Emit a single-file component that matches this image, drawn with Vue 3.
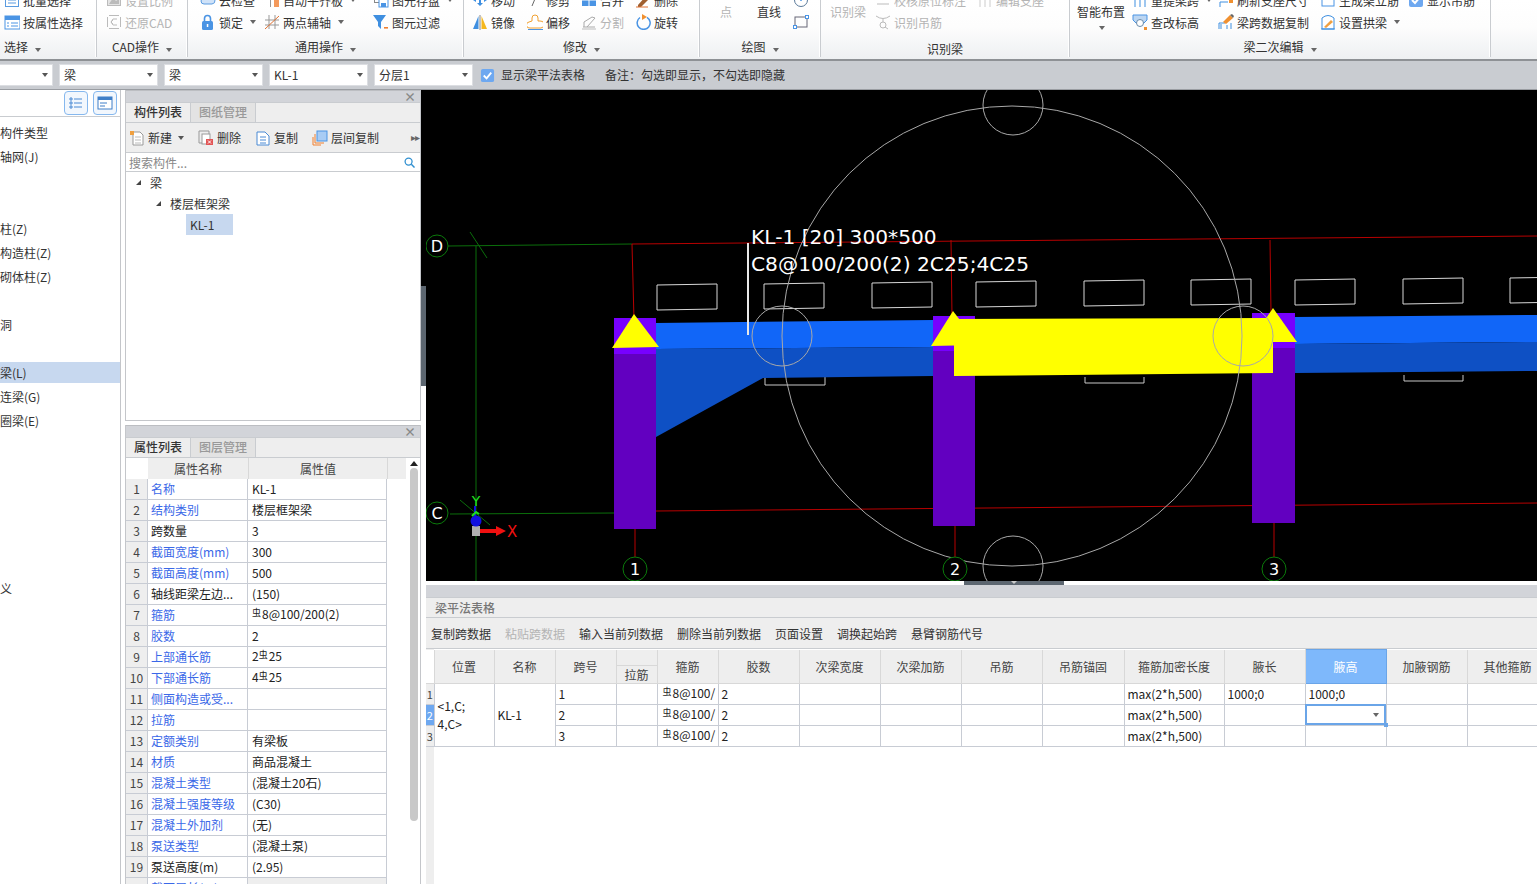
<script setup>
const icons = {
  list: '<rect x="1" y="1" width="14" height="3" fill="#f0a040"/><rect x="1.5" y="1.5" width="13" height="13" fill="none" stroke="#5a9be0"/><path d="M4 8h8M4 11h8" stroke="#5a9be0"/>',
  prop: '<rect x="1" y="2" width="15" height="13" fill="#fff" stroke="#4a94e4"/><rect x="1" y="2" width="15" height="4" fill="#4a94e4"/><path d="M3 9h2M7 9h7M3 12h2M7 12h7" stroke="#4a94e4"/>',
  scale: '<rect x="1.5" y="2.5" width="13" height="11" fill="#e4e4e4" stroke="#bbb"/><path d="M3 12l4-6 3 3 3-2v5z" fill="#bbb"/>',
  cad: '<path d="M3 1.5h10M3 14.5h10M1.5 3v10M14.5 3v10" stroke="#bbb"/><path d="M11 5H7L5 8l2 3h4M7 6l-2 2 2 2" fill="none" stroke="#bbb"/>',
  cloud: '<path d="M4 12a3 3 0 010-6 4 4 0 017-1 3.5 3.5 0 011 7z" fill="#cfe2f8" stroke="#5a9be0"/>',
  lock: '<rect x="2" y="7" width="11" height="9" rx="1.5" fill="#4a94e4"/><path d="M4.5 7V4.5a3 3 0 016 0V7" fill="none" stroke="#4a94e4" stroke-width="1.6"/><rect x="6.8" y="10" width="1.5" height="3" fill="#fff"/>',
  level: '<rect x="6" y="3" width="1" height="12" fill="#999"/><rect x="10" y="3" width="5" height="12" fill="#f49a5c"/>',
  axis: '<path d="M5 1v14M11 1v14M1 6h14M1 11h14" stroke="#999"/><path d="M1 15L15 2" stroke="#e07030"/>',
  save: '<rect x="1.5" y="2.5" width="9" height="8" fill="none" stroke="#888"/><rect x="6" y="7" width="9" height="8" fill="#fff" stroke="#4a94e4"/><rect x="8" y="11" width="5" height="4" fill="#4a94e4"/>',
  filter: '<path d="M0 1h13L8 8v7L5 12V8z" fill="#3f8fe0"/><rect x="11" y="13" width="4" height="1.6" fill="#f08030"/>',
  move: '<path d="M8 2l3 3H9v6h2l-3 3-3-3h2V5H5zM1 8l3-2v4zM15 8l-3-2v4z" fill="#3f8fe0"/>',
  trim: '<path d="M5 14L10 2" stroke="#666"/>',
  merge: '<rect x="1" y="2" width="14" height="12" fill="#4a94e4"/><path d="M1 8h14M8 2v12" stroke="#fff"/>',
  erase: '<path d="M3 13l8-9 3 3-8 8H3z" fill="#a06030"/><path d="M1 15h12" stroke="#e07030"/>',
  mirror: '<path d="M6.5 2v13H1z" fill="#3f8fe0"/><path d="M9.5 2v13H15z" fill="#f5b81e"/><path d="M8 1v15" stroke="#888"/>',
  offset: '<path d="M3 14a3 3 0 01-1-6l3-1V4a3 3 0 016 0v3h2a3.5 3.5 0 011 7z" fill="#fff" stroke="#f0a030"/><path d="M1 15.5h15" stroke="#4a94e4"/>',
  split: '<path d="M2 13h12M3 13V8l8-5 3 1-8 9" fill="none" stroke="#aaa"/><path d="M1 15h14" stroke="#bbb"/>',
  rotate: '<path d="M5 3.5a6.5 6.5 0 107-.2" fill="none" stroke="#4a94e4" stroke-width="1.5"/><path d="M7 0v6l5-3z" fill="#f09030"/>',
  circle: '<circle cx="8" cy="8" r="6.5" fill="none" stroke="#5a7a9a"/><circle cx="8" cy="8" r="1" fill="#4a94e4"/>',
  rect: '<rect x="2" y="3" width="12" height="10" fill="none" stroke="#667"/><rect x="0.5" y="11.5" width="3" height="3" fill="#fff" stroke="#4a94e4"/><rect x="12.5" y="1.5" width="3" height="3" fill="#fff" stroke="#4a94e4"/>',
  check: '<path d="M1 5h14v1l-3 2H4L1 6z" fill="#ccc"/><path d="M2 12h12" stroke="#bbb"/>',
  hook: '<path d="M1 2q7 5 14 0M8 5v3" fill="none" stroke="#bbb"/><circle cx="8" cy="11" r="3" fill="none" stroke="#bbb"/><path d="M10 13l3 2" stroke="#bbb"/>',
  seat: '<path d="M1 5h14M3 15V5M8 15V5M13 15V5" stroke="#ccc"/>',
  span: '<path d="M1 3h14v3H1zM3 6v9M8 6v9M13 6v9" fill="none" stroke="#3f8fe0"/><rect x="1" y="1" width="14" height="2" fill="#f09030"/>',
  height: '<path d="M1 1h14v5l-3 3H4L1 6z" fill="#bcd6f2" stroke="#4a94e4"/><circle cx="8" cy="9" r="3.5" fill="#fff" stroke="#6a8aa8"/><rect x="12" y="13" width="3" height="3" fill="#f09030"/>',
  copyspan: '<path d="M1 15V9h6M3 15v-5M9 15v-4M13 15V9" fill="none" stroke="#3f8fe0"/><path d="M5 8l7-7 3 3-7 6z" fill="#f09030"/><path d="M12 1l2-1 2 2-1 2z" fill="#666"/>',
  refresh: '<path d="M2 15v-5h8" fill="none" stroke="#3f8fe0"/><circle cx="9" cy="4" r="3" fill="#d8e8f8" stroke="#667"/><rect x="11" y="7" width="4" height="4" fill="#f09030"/>',
  arch: '<path d="M2 4q6-5 12 0v11H2z" fill="#fff" stroke="#3f8fe0"/><path d="M4 13l7-7 2 2-7 6z" fill="#f0a040"/><path d="M1 15h14" stroke="#3f8fe0"/>',
  frame: '<rect x="2" y="2" width="12" height="12" fill="#fff" stroke="#4a94e4"/><rect x="5" y="6" width="2" height="2" fill="#f09030"/><rect x="9" y="6" width="2" height="2" fill="#f09030"/>',
  checked: '<rect x="1" y="1" width="14" height="14" rx="2" fill="#6ea8f0"/><path d="M4 8l3 3 5-6" fill="none" stroke="#fff" stroke-width="2"/>',
  newdoc: '<path d="M4 2h7l3 3v10H4z" fill="#fff" stroke="#999"/><rect x="1" y="1" width="4" height="4" fill="#f0a040"/><path d="M6 7h6M6 10h6M6 13h6" stroke="#bbb"/>',
  del: '<path d="M1 1h10v3M1 1v12h4" fill="none" stroke="#999"/><rect x="4" y="4" width="8" height="10" fill="#fff" stroke="#999"/><rect x="8" y="9" width="7" height="6" fill="#e25555"/><path d="M10 10.5l3 3M13 10.5l-3 3" stroke="#fff"/>',
  copy: '<path d="M2 2h8l4 4v9H2z" fill="#fff" stroke="#4a8ad4"/><path d="M5 7h6M5 10h6M5 13h6" stroke="#4a8ad4"/>',
  floor: '<rect x="5" y="1" width="10" height="10" fill="#a8ccf4" stroke="#4a94e4"/><path d="M3 4v9h9M1 7v8h8" fill="none" stroke="#f08030"/>'
}

const ribbon = [
  { name: '选择', w: 97, pad: 4, left: true, cols: [
    { items: [{ t: '批量选择', i: 'list' }, { t: '按属性选择', i: 'prop' }] }
  ] },
  { name: 'CAD操作', w: 91, pad: 9, cols: [
    { items: [{ t: '设置比例', i: 'scale', dim: true }, { t: '还原CAD', i: 'cad', dim: true }] }
  ] },
  { name: '通用操作', w: 276, pad: 12, cols: [
    { w: 64, items: [{ t: '云检查', i: 'cloud' }, { t: '锁定', i: 'lock', drop: true }] },
    { w: 109, items: [{ t: '自动平齐板', i: 'level', drop: true }, { t: '两点辅轴', i: 'axis', drop: true }] },
    { items: [{ t: '图元存盘', i: 'save', drop: true }, { t: '图元过滤', i: 'filter' }] }
  ] },
  { name: '修改', w: 236, pad: 8, cols: [
    { w: 55, items: [{ t: '移动', i: 'move' }, { t: '镜像', i: 'mirror' }] },
    { w: 54, items: [{ t: '修剪', i: 'trim' }, { t: '偏移', i: 'offset' }] },
    { w: 54, items: [{ t: '合并', i: 'merge' }, { t: '分割', i: 'split', dim: true }] },
    { items: [{ t: '删除', i: 'erase' }, { t: '旋转', i: 'rotate' }] }
  ] },
  { name: '绘图', w: 121, pad: 20, cols: [
    { w: 37, items: [{ t: '点', big: true, dim: true }] },
    { w: 36, items: [{ t: '直线', big: true }] },
    { items: [{ i: 'circle' }, { i: 'rect' }] }
  ] },
  { name: '识别梁', w: 249, pad: 9, low: true, cols: [
    { w: 45, items: [{ t: '识别梁', big: true, dim: true }] },
    { w: 102, items: [{ t: '校核原位标注', i: 'check', dim: true }, { t: '识别吊筋', i: 'hook', dim: true }] },
    { items: [{ t: '编辑支座', i: 'seat', dim: true }] }
  ] },
  { name: '梁二次编辑', w: 421, pad: 7, cols: [
    { w: 55, items: [{ t: '智能布置', big: true, under: true }] },
    { w: 86, items: [{ t: '重提梁跨', i: 'span', drop: true }, { t: '查改标高', i: 'height' }] },
    { w: 102, items: [{ t: '刷新支座尺寸', i: 'refresh' }, { t: '梁跨数据复制', i: 'copyspan' }] },
    { w: 88, items: [{ t: '生成架立筋', i: 'frame' }, { t: '设置拱梁', i: 'arch', drop: true }] },
    { items: [{ t: '显示吊筋', i: 'checked' }] }
  ] }
]

const combos = [
  { t: '', w: 53 },
  { t: '梁', w: 99 },
  { t: '梁', w: 99 },
  { t: 'KL-1', w: 99 },
  { t: '分层1', w: 99 }
]

const navItems = ['构件类型', '轴网(J)', '', '', '柱(Z)', '构造柱(Z)', '砌体柱(Z)', '', '洞', '', '梁(L)', '连梁(G)', '圈梁(E)', '', '', '', '', '', '', '义']

const compTools = [
  { t: '新建', i: 'newdoc', drop: true },
  { t: '删除', i: 'del' },
  { t: '复制', i: 'copy' },
  { t: '层间复制', i: 'floor' }
]

const props = [
  ['名称', 'KL-1', 1],
  ['结构类别', '楼层框架梁', 1],
  ['跨数量', '3', 0],
  ['截面宽度(mm)', '300', 1],
  ['截面高度(mm)', '500', 1],
  ['轴线距梁左边...', '(150)', 0],
  ['箍筋', '#8@100/200(2)', 1],
  ['胶数', '2', 1],
  ['上部通长筋', '2#25', 1],
  ['下部通长筋', '4#25', 1],
  ['侧面构造或受...', '', 1],
  ['拉筋', '', 1],
  ['定额类别', '有梁板', 1],
  ['材质', '商品混凝土', 1],
  ['混凝土类型', '(混凝土20石)', 1],
  ['混凝土强度等级', '(C30)', 1],
  ['混凝土外加剂', '(无)', 1],
  ['泵送类型', '(混凝土泵)', 1],
  ['泵送高度(m)', '(2.95)', 0],
  ['截面周长(m)', '', 1]
]

// '#' in a value stands for the rebar grade symbol
const splitRebar = (v) => {
  const at = v.indexOf('#')
  return at < 0 ? null : [v.slice(0, at), v.slice(at + 1)]
}

const beamTools = [
  { t: '复制跨数据' },
  { t: '粘贴跨数据', dim: true },
  { t: '输入当前列数据' },
  { t: '删除当前列数据' },
  { t: '页面设置' },
  { t: '调换起始跨' },
  { t: '悬臂钢筋代号' }
]

const colWidths = [8, 60, 61, 61, 41, 61, 81, 81, 81, 81, 82, 100, 81, 81, 81, 81]
const headAfter = ['胶数', '次梁宽度', '次梁加筋', '吊筋', '吊筋锚固', '箍筋加密长度', '腋长']
const spans = [
  { n: 1, wl: '1000;0', wh: '1000;0' },
  { n: 2, wl: '', wh: '', editing: true },
  { n: 3, wl: '', wh: '' }
]

const topRects = [[657, 285], [764, 284], [872, 283], [976, 282], [1084, 281], [1191, 280], [1295, 280], [1403, 279], [1510, 278]]
const rectPoints = (r) => `${r[0]},${r[1]} ${r[0] + 60},${r[1] - 1} ${r[0] + 60},${r[1] + 24} ${r[0]},${r[1] + 25}`
const axisMarks = [
  { t: 'D', x: 437, y: 246, r: 11 },
  { t: 'C', x: 437, y: 513, r: 11 },
  { t: '1', x: 635, y: 569, r: 12 },
  { t: '2', x: 955, y: 569, r: 12 },
  { t: '3', x: 1274, y: 569, r: 12 }
]
const bigRings = [[1013, 105], [1013, 566], [782, 336], [1243, 336]]
</script>

<template>
  <div class="app">
    <div class="ribbon">
      <div v-for="g in ribbon" :key="g.name" class="rb-group" :style="{ width: g.w + 'px' }">
        <div class="rb-body" :style="{ paddingLeft: g.pad + 'px' }">
          <div v-for="(c, ci) in g.cols" :key="ci" class="rb-col" :style="c.w ? { width: c.w + 'px' } : null">
            <div
              v-for="(it, ii) in c.items"
              :key="ii"
              class="rb-item"
              :class="{ dim: it.dim, big: it.big, under: it.under }"
            >
              <svg v-if="it.i" class="ic" viewBox="0 0 16 16" v-html="icons[it.i]"></svg>
              <span v-if="it.t">{{ it.t }}</span>
              <i v-if="it.drop" class="caret"></i>
              <i v-if="it.under" class="caret under-caret"></i>
            </div>
          </div>
        </div>
        <div class="rb-label" :class="{ low: g.low, left: g.left }">{{ g.name }}<i class="caret" v-if="!g.low"></i></div>
      </div>
    </div>

    <div class="filterbar">
      <div v-for="(c, i) in combos" :key="i" class="combo" :style="{ width: c.w + 'px' }">
        <span>{{ c.t }}</span><i class="caret"></i>
      </div>
      <svg class="ic chk" viewBox="0 0 16 16" v-html="icons.checked"></svg>
      <span class="chk-label">显示梁平法表格</span>
      <span class="chk-note">备注：勾选即显示，不勾选即隐藏</span>
    </div>

    <div class="main">
      <aside class="nav">
        <div class="nav-top">
          <button type="button" class="nav-btn">
            <svg viewBox="0 0 16 16"><path d="M2 3h2v2H2zM2 7h2v2H2zM2 11h2v2H2zM6 4h8M6 8h8M6 12h8" fill="none" stroke="#4a8ad4"/></svg>
          </button>
          <button type="button" class="nav-btn">
            <svg viewBox="0 0 16 16"><rect x="1" y="2" width="14" height="12" fill="#fff" stroke="#3f7fc8"/><rect x="1" y="2" width="14" height="3" fill="#3f7fc8"/><path d="M3 8h7M3 11h5" stroke="#3f7fc8"/></svg>
          </button>
        </div>
        <div class="nav-list">
          <div v-for="(n, i) in navItems" :key="i" class="nav-row" :class="{ on: n === '梁(L)' }">{{ n }}</div>
        </div>
      </aside>

      <div class="mid">
        <section class="panel comp-panel">
          <div class="strip"><span class="close">×</span></div>
          <div class="tabs">
            <div class="tab on">构件列表</div>
            <div class="tab">图纸管理</div>
          </div>
          <div class="comp-tools">
            <div v-for="c in compTools" :key="c.t" class="comp-tool">
              <svg class="ic" viewBox="0 0 16 16" v-html="icons[c.i]"></svg>
              <span>{{ c.t }}</span>
              <i v-if="c.drop" class="caret"></i>
            </div>
            <span class="more">▸▸</span>
          </div>
          <div class="search">
            <span>搜索构件...</span>
            <svg viewBox="0 0 12 12"><circle cx="5" cy="5" r="3.8" fill="none" stroke="#2f8fd0" stroke-width="1.4"/><path d="M8 8l3.5 3.5" stroke="#2f8fd0" stroke-width="1.6"/></svg>
          </div>
          <div class="tree">
            <div class="tree-row l0"><i class="tri"></i>梁</div>
            <div class="tree-row l1"><i class="tri"></i>楼层框架梁</div>
            <div class="tree-row l2"><span class="tree-sel">KL-1</span></div>
          </div>
        </section>

        <section class="panel prop-panel">
          <div class="strip"><span class="close">×</span></div>
          <div class="tabs">
            <div class="tab on">属性列表</div>
            <div class="tab">图层管理</div>
          </div>
          <div class="prop-body">
            <div class="prop-scroll">
              <i class="scroll-up"></i>
              <i class="scroll-thumb"></i>
            </div>
            <div class="prop-head">
              <span class="ph-num"></span>
              <span class="ph-name">属性名称</span>
              <span class="ph-val">属性值</span>
            </div>
            <table class="prop-table">
              <tbody>
                <tr v-for="(p, i) in props" :key="i">
                  <td class="p-num">{{ i + 1 }}</td>
                  <td class="p-name" :class="{ link: p[2] }">{{ p[0] }}</td>
                  <td class="p-val" :class="{ blank: i === 19 }">
                    <template v-if="splitRebar(p[1])">{{ splitRebar(p[1])[0] }}<span class="rebar">虫</span>{{ splitRebar(p[1])[1] }}</template>
                    <template v-else>{{ p[1] }}</template>
                  </td>
                </tr>
              </tbody>
            </table>
          </div>
        </section>
      </div>

      <div class="vsplit">
        <div class="vs-top"></div>
        <div class="vs-grip"></div>
      </div>

      <div class="work">
        <svg class="cad" viewBox="426 90 1111 491">
          <rect x="426" y="90" width="1111" height="491" fill="#000" />
          <g fill="none" stroke-width="1">
            <path d="M448 246L632 244M476 246V581M470 232L487 258M450 514L614 513M460 500L490 525" stroke="#0b6e0b" />
            <path d="M632 244L1537 236M656 511L1537 503M632 244L634 320M951 240L952 316M1270 240L1271 313M635 529V580M955 526V580M1274 523V580" stroke="#b80000" />
            <polygon v-for="r in topRects" :key="r[0]" :points="rectPoints(r)" stroke="#d8d8d8" />
            <path d="M765 377V385H825V377M1085 377V383H1144V377M1404 375V381H1463V375" stroke="#c8c8c8" />
          </g>

          <rect x="614" y="318" width="42" height="211" fill="#6200c0" />
          <rect x="614" y="318" width="42" height="36" fill="#7700ff" />
          <rect x="933" y="316" width="42" height="210" fill="#6200c0" />
          <rect x="933" y="316" width="42" height="35" fill="#7700ff" />
          <rect x="1252" y="313" width="43" height="210" fill="#6200c0" />
          <rect x="1252" y="313" width="43" height="35" fill="#7700ff" />

          <polygon points="656,323 933,320 933,347 656,349" fill="#1166f8" />
          <polygon points="656,349 933,347 933,376 763,378 656,437" fill="#0e50c4" />
          <polygon points="1295,317 1537,315 1537,342 1295,344" fill="#1166f8" />
          <polygon points="1295,344 1537,342 1537,371 1295,373" fill="#0e50c4" />

          <polygon points="954,319 1273,318 1273,373 954,376" fill="#ffff00" />
          <polygon points="634,314 612,348 659,347" fill="#ffff00" />
          <polygon points="953,311 931,346 979,345" fill="#ffff00" />
          <polygon points="1273,308 1250,342 1297,342" fill="#ffff00" />

          <g fill="none" stroke="#a8a8a8">
            <circle cx="1012" cy="336" r="230" />
            <circle v-for="c in bigRings" :key="c[0] + '-' + c[1]" :cx="c[0]" :cy="c[1]" r="30" />
          </g>
          <path d="M748 243V335" stroke="#e8e8e8" stroke-width="2" />
          <text x="751" y="244" class="cad-note">KL-1 [20] 300*500</text>
          <text x="751" y="271" class="cad-note">C8@100/200(2) 2C25;4C25</text>

          <g v-for="m in axisMarks" :key="m.t">
            <circle :cx="m.x" :cy="m.y" :r="m.r" fill="#000" stroke="#0b7a0b" />
            <text :x="m.x" :y="m.y + 6" class="cad-axis">{{ m.t }}</text>
          </g>

          <rect x="472" y="526" width="8" height="10" fill="#b0b0b0" />
          <path d="M480 529h16v-3l10 5-10 5v-3h-16z" fill="#f01010" />
          <circle cx="476" cy="521" r="5.5" fill="#1010e0" />
          <path d="M475 506V516" stroke="#1010e0" stroke-width="2" />
          <path d="M472 516l4-4 3 2" fill="none" stroke="#20e020" stroke-width="2" />
          <text x="476" y="506" class="cad-y">Y</text>
          <text x="507" y="537" class="cad-x">X</text>
        </svg>

        <div class="hsplit"><div class="hs-grip"><i class="grip-arrow"></i></div></div>

        <section class="beam">
          <div class="strip beam-strip"></div>
          <div class="beam-title">梁平法表格</div>
          <div class="beam-tools">
            <span v-for="b in beamTools" :key="b.t" :class="{ dim: b.dim }">{{ b.t }}</span>
          </div>
          <div class="beam-grid">
            <table class="beam-table">
              <colgroup>
                <col v-for="(w, i) in colWidths" :key="i" :style="{ width: w + 'px' }" />
              </colgroup>
              <thead>
                <tr>
                  <th rowspan="2" class="corner"></th>
                  <th rowspan="2">位置</th>
                  <th rowspan="2">名称</th>
                  <th rowspan="2">跨号</th>
                  <th></th>
                  <th rowspan="2">箍筋</th>
                  <th v-for="h in headAfter" :key="h" rowspan="2">{{ h }}</th>
                  <th rowspan="2" class="active">腋高</th>
                  <th rowspan="2">加腋钢筋</th>
                  <th rowspan="2">其他箍筋</th>
                </tr>
                <tr>
                  <th>拉筋</th>
                </tr>
              </thead>
              <tbody>
                <tr v-for="(s, i) in spans" :key="s.n">
                  <td class="r-num" :class="{ on: s.editing }">{{ s.n }}</td>
                  <template v-if="i === 0">
                    <td rowspan="3" class="pos"><div>&lt;1,C;</div><div>4,C&gt;</div></td>
                    <td rowspan="3">KL-1</td>
                  </template>
                  <td>{{ s.n }}</td>
                  <td></td>
                  <td class="stirrup"><span class="rebar">虫</span>8@100/</td>
                  <td>2</td>
                  <td></td>
                  <td></td>
                  <td></td>
                  <td></td>
                  <td>max(2*h,500)</td>
                  <td>{{ s.wl }}</td>
                  <td :class="{ editing: s.editing }">
                    {{ s.wh }}
                    <template v-if="s.editing"><i class="caret"></i><i class="handle"></i></template>
                  </td>
                  <td></td>
                  <td></td>
                </tr>
              </tbody>
            </table>
          </div>
        </section>
      </div>
    </div>
  </div>
</template>

<style>
html,
body {
  margin: 0;
  overflow: hidden;
  background: #fff;
}
</style>

<style scoped>
.app {
  width: 1537px;
  height: 884px;
  overflow: hidden;
  display: flex;
  flex-direction: column;
  font-family: "Noto Sans CJK SC", "Liberation Sans", sans-serif;
  font-size: 12px;
  color: #333;
}

.ic {
  width: 16px;
  height: 16px;
  flex: none;
}

.caret {
  display: inline-block;
  width: 0;
  height: 0;
  border-left: 3.5px solid transparent;
  border-right: 3.5px solid transparent;
  border-top: 4px solid #666;
  margin-left: 7px;
}

.ribbon {
  height: 59px;
  flex: none;
  display: flex;
  overflow: hidden;
  background: linear-gradient(#fff, #fdfdfd 45%, #eef0f2);
  border-bottom: 2px solid #8e9195;
}

.rb-group {
  flex: none;
  box-sizing: border-box;
  height: 57px;
  border-right: 1px solid #c9ccd0;
  box-shadow: inset -1px 0 0 #fff;
}

.rb-body {
  height: 44px;
  margin-top: -11px;
  display: flex;
}

.rb-col {
  flex: none;
  display: flex;
  flex-direction: column;
}

.rb-item {
  height: 22px;
  display: flex;
  align-items: center;
  gap: 3px;
  white-space: nowrap;
}

.rb-item .caret {
  margin-left: 4px;
}

.rb-item.big {
  height: 44px;
}

.rb-item.under {
  position: relative;
}

.rb-item .under-caret {
  position: absolute;
  left: 22px;
  top: 37px;
  margin: 0;
}

.dim {
  color: #b4b4b4;
}

.rb-label {
  height: 22px;
  line-height: 22px;
  margin-top: 3px;
  text-align: center;
  color: #333;
}

.rb-label.left {
  text-align: left;
  padding-left: 4px;
}

.rb-label.low {
  line-height: 26px;
}

.filterbar {
  height: 26px;
  flex: none;
  display: flex;
  align-items: center;
  padding-bottom: 2px;
  background: #c9ccd1;
  border-bottom: 1px solid #9a9da2;
}

.combo {
  flex: none;
  box-sizing: border-box;
  height: 22px;
  margin-top: 2px;
  margin-right: 6px;
  padding: 0 4px 2px;
  background: #fff;
  border: 1px solid #dcdee2;
  display: flex;
  align-items: center;
  justify-content: space-between;
}

.combo:first-child {
  border-left: none;
}

.combo .caret {
  border-top-color: #555;
  margin: 2px 0 0 4px;
}

.chk {
  width: 15px;
  height: 15px;
  margin-left: 1px;
  margin-top: 2px;
}

.chk-label {
  margin-left: 6px;
}

.chk-note {
  margin-left: 20px;
}

.main {
  flex: 1;
  min-height: 0;
  display: flex;
}

.nav {
  flex: none;
  box-sizing: border-box;
  width: 121px;
  border-right: 1px solid #c4c6ca;
  background: #fff;
}

.nav-top {
  height: 26px;
  border-bottom: 1px solid #c9ccd0;
  display: flex;
  justify-content: flex-end;
  align-items: center;
  gap: 5px;
  padding-right: 3px;
}

.nav-btn {
  width: 24px;
  height: 24px;
  padding: 3px;
  background: #f2f7fd;
  border: 1px solid #86b8ee;
  border-radius: 4px;
  display: flex;
}

.nav-btn svg {
  width: 16px;
  height: 16px;
}

.nav-list {
  padding-top: 4px;
}

.nav-row {
  box-sizing: border-box;
  height: 24px;
  line-height: 24px;
  white-space: nowrap;
}

.nav-row.on {
  background: linear-gradient(transparent 1px, #c7d8ef 1px, #c7d8ef 22px, transparent 22px);
}

.mid {
  flex: none;
  box-sizing: border-box;
  width: 300px;
  padding-left: 4px;
  display: flex;
  flex-direction: column;
  gap: 4px;
  background: #fff;
}

.panel {
  box-sizing: border-box;
  border: 1px solid #c4c6ca;
  border-top: none;
  overflow: hidden;
  background: #fff;
}

.comp-panel {
  height: 331px;
  flex: none;
}

.prop-panel {
  flex: 1;
  min-height: 0;
  border-bottom: none;
}

.strip {
  box-sizing: border-box;
  height: 12px;
  background: #d2d4d9;
  border-top: 1px solid #bcbec2;
  display: flex;
  justify-content: flex-end;
  align-items: center;
  padding-right: 4px;
}

.close {
  font-size: 12px;
  line-height: 10px;
  color: #888;
  font-weight: 700;
}

.tabs {
  box-sizing: border-box;
  height: 21px;
  display: flex;
  background: #eee;
  border-bottom: 1px solid #c9ccd0;
  border-top: 1px solid #c9ccd0;
}

.tab {
  width: 64px;
  text-align: center;
  line-height: 18px;
  font-weight: 500;
  color: #999;
  background: #e3e3e3;
  border-right: 1px solid #c9ccd0;
}

.tab.on {
  color: #333;
  background: #eee;
}

.comp-tools {
  box-sizing: border-box;
  height: 30px;
  display: flex;
  align-items: center;
  gap: 14px;
  padding-left: 3px;
  background: #eee;
  border-bottom: 1px solid #c9ccd0;
  position: relative;
}

.comp-tool {
  display: flex;
  align-items: center;
  gap: 3px;
}

.comp-tool .caret {
  margin-left: 3px;
  border-top-color: #555;
}

.more {
  position: absolute;
  right: 1px;
  top: 6px;
  font-size: 10px;
  letter-spacing: -1px;
  color: #666;
}

.search {
  box-sizing: border-box;
  height: 19px;
  display: flex;
  align-items: center;
  justify-content: space-between;
  padding: 0 5px 0 3px;
  color: #888;
  border-bottom: 1px solid #c9ccd0;
}

.search svg {
  width: 11px;
  height: 11px;
}

.tree-row {
  height: 21px;
  display: flex;
  align-items: center;
  white-space: nowrap;
}

.tree-row.l0 {
  padding-left: 10px;
}

.tree-row.l1 {
  padding-left: 30px;
}

.tree-row.l2 {
  padding-left: 60px;
}

.tri {
  width: 0;
  height: 0;
  border-left: 5px solid transparent;
  border-bottom: 5px solid #444;
  margin-right: 9px;
}

.tree-sel {
  width: 47px;
  box-sizing: border-box;
  height: 21px;
  line-height: 21px;
  padding-left: 4px;
  background: #c7d8ef;
}

.prop-body {
  position: relative;
  height: 426px;
}

.prop-scroll {
  position: absolute;
  right: 0;
  top: 0;
  width: 14px;
  height: 100%;
  background: #fff;
  z-index: 1;
}

.scroll-up {
  position: absolute;
  left: 4px;
  top: 3px;
  width: 0;
  height: 0;
  border-left: 4px solid transparent;
  border-right: 4px solid transparent;
  border-bottom: 5px solid #222;
}

.scroll-thumb {
  position: absolute;
  left: 4px;
  top: 10px;
  width: 8px;
  height: 353px;
  border-radius: 4px;
  background: #c8c8c8;
}

.prop-head {
  height: 21px;
  display: flex;
  background: #eee;
  line-height: 21px;
  text-align: center;
  color: #444;
}

.ph-num {
  width: 22px;
  background: #fff;
}

.ph-name {
  width: 100px;
  border-right: 1px solid #d8d8d8;
}

.ph-val {
  width: 138px;
  border-right: 1px solid #d8d8d8;
}

.prop-table {
  border-collapse: collapse;
  table-layout: fixed;
  width: 261px;
}

.prop-table td {
  height: 20px;
  padding: 0 3px;
  border: 1px solid #c8ccd4;
  white-space: nowrap;
  overflow: hidden;
  line-height: 18px;
}

.prop-table tr:first-child td {
  border-top: none;
}

.p-num {
  width: 15px;
  text-align: center;
  background: #eee;
  color: #444;
  border-left: none !important;
}

.p-name {
  width: 93px;
  color: #222;
}

.p-name.link {
  color: #3a68e8;
}

.p-val {
  color: #222;
  padding-left: 4px !important;
}

.p-val.blank {
  background: #eee;
}

.rebar {
  font-size: 9px;
  position: relative;
  top: -3px;
  margin-right: 1px;
  color: #222;
}

.vsplit {
  flex: none;
  width: 5px;
  background: #fff;
}

.vs-top {
  height: 196px;
  background: #000;
}

.vs-grip {
  height: 100px;
  background: #5c6670;
}

.work {
  flex: 1;
  min-width: 0;
  display: flex;
  flex-direction: column;
}

.cad {
  display: block;
  width: 1111px;
  height: 491px;
  flex: none;
}

.cad-note {
  font-family: "DejaVu Sans", sans-serif;
  font-size: 20.2px;
  fill: #fff;
}

.cad-axis {
  font-family: "DejaVu Sans", sans-serif;
  font-size: 16px;
  fill: #fff;
  text-anchor: middle;
}

.cad-y {
  font-family: "DejaVu Sans", sans-serif;
  font-size: 14px;
  fill: #20e020;
  text-anchor: middle;
}

.cad-x {
  font-family: "DejaVu Sans", sans-serif;
  font-size: 15px;
  fill: #f01010;
}

.hsplit {
  height: 4px;
  flex: none;
  background: #fff;
  padding-left: 538px;
}

.hs-grip {
  width: 100px;
  height: 4px;
  background: #5c6670;
  display: flex;
  justify-content: center;
}

.grip-arrow {
  width: 0;
  height: 0;
  border-left: 3px solid transparent;
  border-right: 3px solid transparent;
  border-top: 3px solid #ccc;
}

.beam {
  flex: 1;
  min-height: 0;
  overflow: hidden;
  background: #fff;
}

.beam-strip {
  border-top: none;
}

.beam-title {
  box-sizing: border-box;
  height: 21px;
  line-height: 19px;
  padding-left: 9px;
  background: #eee;
  color: #777;
  font-weight: 500;
  border-top: 1px solid #c9ccd0;
  border-bottom: 1px solid #c9ccd0;
}

.beam-tools {
  box-sizing: border-box;
  height: 31px;
  display: flex;
  align-items: center;
  gap: 14px;
  padding-left: 5px;
  background: #eee;
  border-bottom: 1px solid #c9ccd0;
}

.beam-grid {
  overflow: hidden;
  height: 235px;
  background: linear-gradient(90deg, #eee 8px, #fff 8px);
}

.beam-table {
  border-collapse: collapse;
  table-layout: fixed;
  width: 1122px;
}

.beam-table th {
  height: 15px;
  padding: 0;
  font-weight: 400;
  color: #444;
  background: #eee;
  border: 1px solid #d8d8d8;
  border-top: none;
  white-space: nowrap;
}

.beam-table th.corner {
  background: #fff;
  border-left: none;
}

.beam-table th.active {
  background: #7eb8fb;
  color: #fff;
  border: 1px solid #6aa5e8;
}

.beam-table td {
  height: 20px;
  padding: 0 3px;
  border: 1px solid #c8ccd4;
  white-space: nowrap;
  overflow: hidden;
  color: #222;
  line-height: 18px;
}

.beam-table td.r-num {
  padding: 0;
  background: #eee;
  color: #444;
  font-size: 11px;
  border-left: none;
  text-align: center;
}

.beam-table td.r-num.on {
  background: #6ea8f0;
  color: #fff;
}

.beam-table td.pos {
  white-space: normal;
}

.beam-table td.stirrup {
  padding-right: 0;
  padding-left: 5px;
}

.beam-table td.editing {
  position: relative;
  overflow: visible;
  outline: 2px solid #6aa5e8;
  outline-offset: -2px;
}

.editing .caret {
  position: absolute;
  right: 7px;
  top: 8px;
  margin: 0;
  border-top-color: #666;
}

.handle {
  position: absolute;
  right: -2px;
  bottom: -2px;
  width: 4px;
  height: 4px;
  background: #6aa5e8;
}
</style>
